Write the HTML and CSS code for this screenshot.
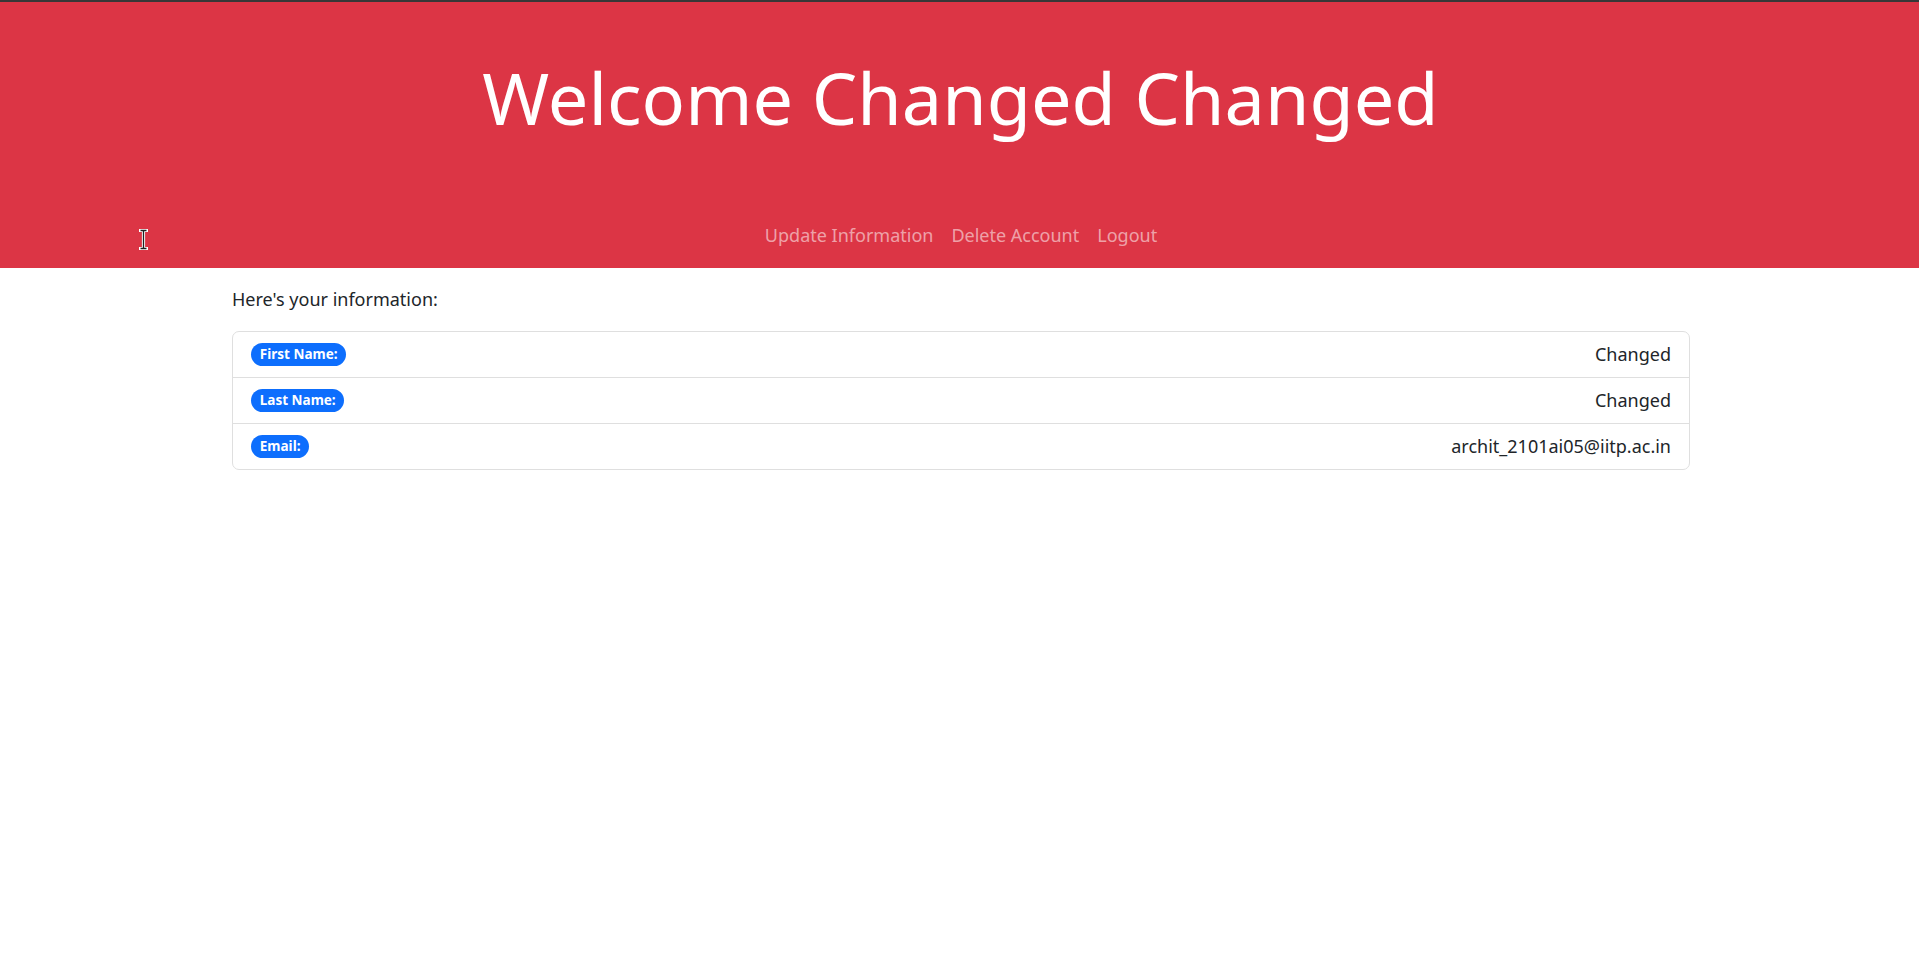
FILE: index.html
```html
<!DOCTYPE html>
<html lang="en">
<head>
<meta charset="utf-8">
<title>Welcome</title>
<link rel="stylesheet" href="styles.css">
</head>
<body>
<header class="hero">
  <h1 class="hero-title">Welcome Changed Changed</h1>
  <nav class="hero-nav">
    <a class="nav-link" href="#">Update Information</a>
    <a class="nav-link" href="#">Delete Account</a>
    <a class="nav-link" href="#">Logout</a>
  </nav>
  <svg class="cursor" width="9" height="21" viewBox="0 0 9 21" aria-hidden="true">
    <path d="M1 1.5h7M1 19.5h7M4.5 1.5v18" stroke="#fff" stroke-width="3.2" fill="none" stroke-linecap="square"/>
    <path d="M1.5 1.5h6M1.5 19.5h6M4.5 1.5v18" stroke="#222" stroke-width="1.3" fill="none"/>
  </svg>
</header>
<main class="content">
  <p class="intro">Here's your information:</p>
  <ul class="info-list">
    <li class="info-row"><span class="badge">First Name:</span><span class="value">Changed</span></li>
    <li class="info-row"><span class="badge">Last Name:</span><span class="value">Changed</span></li>
    <li class="info-row"><span class="badge">Email:</span><span class="value">archit_2101ai05@iitp.ac.in</span></li>
  </ul>
</main>
</body>
</html>
```

FILE: styles.css
```css
html, body {
  margin: 0;
  padding: 0;
}
body {
  font-family: "Noto Sans", "Open Sans", sans-serif;
  font-size: 18px;
  line-height: 1.5;
  color: #212529;
  background: #fff;
  border-top: 2px solid #373737;
}
.hero {
  position: relative;
  background: #dc3545;
  color: #fff;
  padding: 52px 0 18.5px;
  text-align: center;
}
.hero-title {
  margin: 0;
  font-size: 72px;
  font-weight: 400;
  line-height: 1.2;
  padding-left: 2px;
}
.hero-nav {
  display: flex;
  justify-content: center;
  gap: 18px;
  margin-top: 82px;
  padding-left: 3px;
}
.nav-link {
  color: rgba(255, 255, 255, 0.55);
  text-decoration: none;
}
.cursor {
  position: absolute;
  left: 139px;
  top: 227px;
}
.content {
  width: 1458px;
  margin: 0 229px 0 232px;
  padding-top: 18px;
}
.intro {
  margin: 0 0 18px;
}
.info-list {
  list-style: none;
  margin: 0;
  padding: 0;
  border: 1px solid #dfdfdf;
  border-radius: 7px;
}
.info-row {
  display: flex;
  justify-content: space-between;
  align-items: center;
  padding: 9px 18px;
}
.info-row + .info-row {
  border-top: 1px solid #dfdfdf;
}
.badge {
  display: inline-block;
  background: #0d6efd;
  color: #fff;
  font-size: 13.5px;
  font-weight: 700;
  line-height: 1;
  padding: 4.7px 8.8px;
  border-radius: 50rem;
}
```
